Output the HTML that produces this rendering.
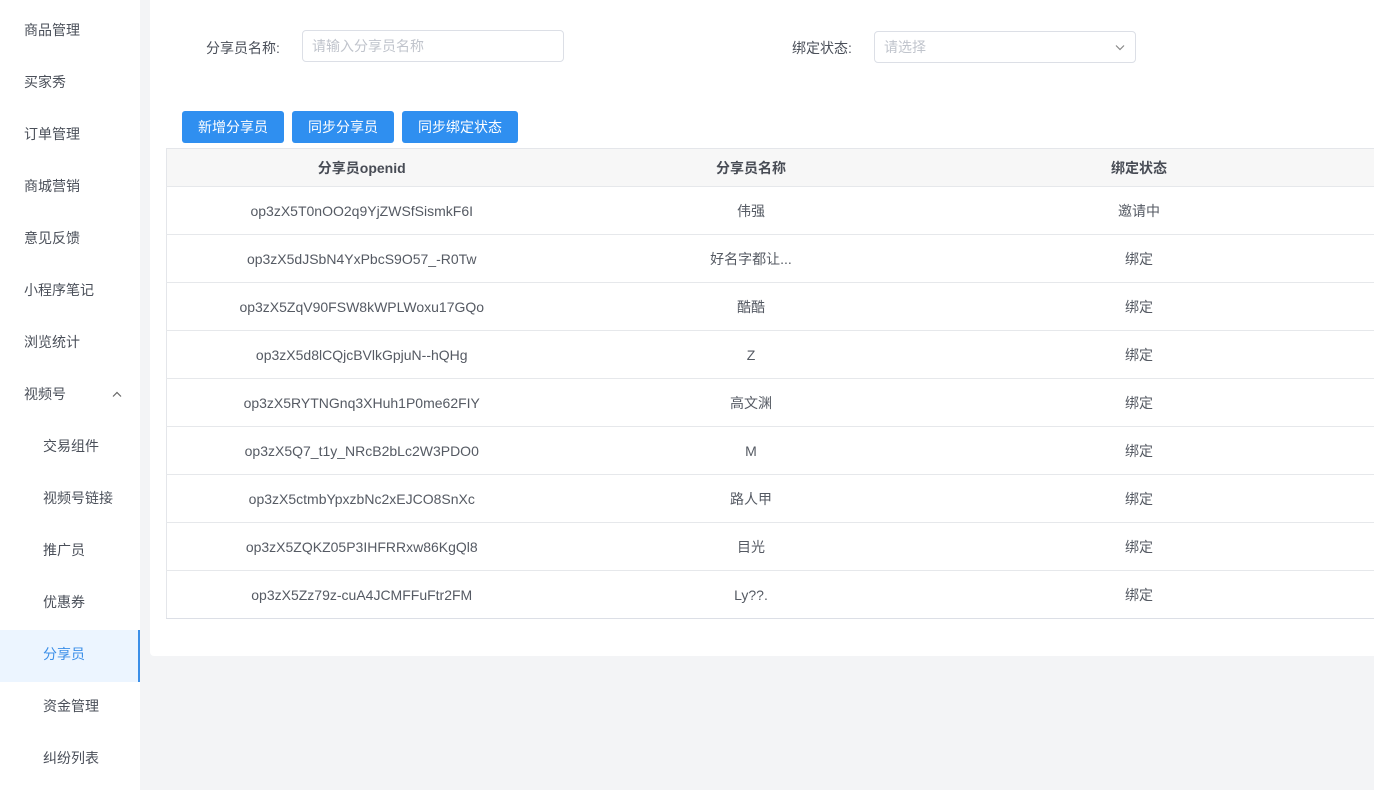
<!DOCTYPE html>
<html><head><meta charset="utf-8"><style>
*{margin:0;padding:0;box-sizing:border-box}
body{width:1374px;height:790px;overflow:hidden;background:#f3f4f6;font-family:"Liberation Sans","Noto Sans CJK SC",sans-serif;font-size:14px;color:#606266;position:relative}
.side{position:absolute;left:0;top:0;width:140px;height:790px;background:#fff}
.side div{position:absolute;left:0;width:140px;height:52px;line-height:52px;padding-left:24px;color:#4a4f59;font-size:14px}
.side div.sub{padding-left:43px}
.side div.act{background:#ecf5ff;color:#3b8fe8;border-right:2px solid #3b8fe8}
.card{position:absolute;left:150px;top:0;width:1224px;height:656px;background:#fff;border-bottom-left-radius:4px}
.lbl{position:absolute;font-size:14px;color:#4a4f59}
.inp{position:absolute;height:32px;border:1px solid #dcdfe6;border-radius:4px;color:#c0c4cc;font-size:14px;line-height:30px;padding-left:9px;background:#fff}
.btn{position:absolute;top:111px;height:32px;background:#2f8ff0;color:#fff;border-radius:3px;line-height:32px;text-align:center;font-size:14px}
table{position:absolute;left:166px;top:148px;width:1208px;border-collapse:collapse;border-left:1px solid #e4e6ea;border-bottom:1px solid #dcdfe6}
td,th{height:48px;text-align:center;border-bottom:1px solid #e6e8eb;font-size:14px;color:#555a63;font-weight:normal;padding:0}
th{height:38px;background:#f7f7f7;font-weight:bold;color:#484c55;border-top:1px solid #e4e6ea}
tr:last-child td{border-bottom:none}
</style></head><body>
<div class="side">
<div style="top:4px">商品管理</div>
<div style="top:56px">买家秀</div>
<div style="top:108px">订单管理</div>
<div style="top:160px">商城营销</div>
<div style="top:212px">意见反馈</div>
<div style="top:264px">小程序笔记</div>
<div style="top:316px">浏览统计</div>
<div style="top:368px">视频号<svg style="position:absolute;left:112px;top:23px" width="10" height="7" viewBox="0 0 10 7"><path d="M1 5.5L5 1.5L9 5.5" fill="none" stroke="#666" stroke-width="1.2"/></svg></div>
<div class="sub" style="top:420px">交易组件</div>
<div class="sub" style="top:472px">视频号链接</div>
<div class="sub" style="top:524px">推广员</div>
<div class="sub" style="top:576px">优惠券</div>
<div class="sub act" style="top:630px;line-height:48px">分享员</div>
<div class="sub" style="top:680px">资金管理</div>
<div class="sub" style="top:732px">纠纷列表</div>
</div>
<div class="card"></div>
<div class="lbl" style="left:206px;top:38px">分享员名称:</div>
<div class="inp" style="left:302px;top:30px;width:262px">请输入分享员名称</div>
<div class="lbl" style="left:792px;top:38px">绑定状态:</div>
<div class="inp" style="left:874px;top:31px;width:262px">请选择<svg style="position:absolute;left:240px;top:12px" width="10" height="7" viewBox="0 0 10 7"><path d="M1 1.5L5 5.5L9 1.5" fill="none" stroke="#888" stroke-width="1.2"/></svg></div>
<div class="btn" style="left:182px;width:102px">新增分享员</div>
<div class="btn" style="left:292px;width:102px">同步分享员</div>
<div class="btn" style="left:402px;width:116px">同步绑定状态</div>
<table>
<colgroup><col style="width:390px"><col style="width:389px"><col style="width:387px"><col></colgroup>
<tr><th>分享员openid</th><th>分享员名称</th><th>绑定状态</th><th></th></tr>
<tr><td>op3zX5T0nOO2q9YjZWSfSismkF6I</td><td>伟强</td><td>邀请中</td><td></td></tr>
<tr><td>op3zX5dJSbN4YxPbcS9O57_-R0Tw</td><td>好名字都让...</td><td>绑定</td><td></td></tr>
<tr><td>op3zX5ZqV90FSW8kWPLWoxu17GQo</td><td>酷酷</td><td>绑定</td><td></td></tr>
<tr><td>op3zX5d8lCQjcBVlkGpjuN--hQHg</td><td>Z</td><td>绑定</td><td></td></tr>
<tr><td>op3zX5RYTNGnq3XHuh1P0me62FIY</td><td>高文渊</td><td>绑定</td><td></td></tr>
<tr><td>op3zX5Q7_t1y_NRcB2bLc2W3PDO0</td><td>M</td><td>绑定</td><td></td></tr>
<tr><td>op3zX5ctmbYpxzbNc2xEJCO8SnXc</td><td>路人甲</td><td>绑定</td><td></td></tr>
<tr><td>op3zX5ZQKZ05P3IHFRRxw86KgQl8</td><td>目光</td><td>绑定</td><td></td></tr>
<tr><td>op3zX5Zz79z-cuA4JCMFFuFtr2FM</td><td>Ly??.</td><td>绑定</td><td></td></tr>
</table>
</body></html>
